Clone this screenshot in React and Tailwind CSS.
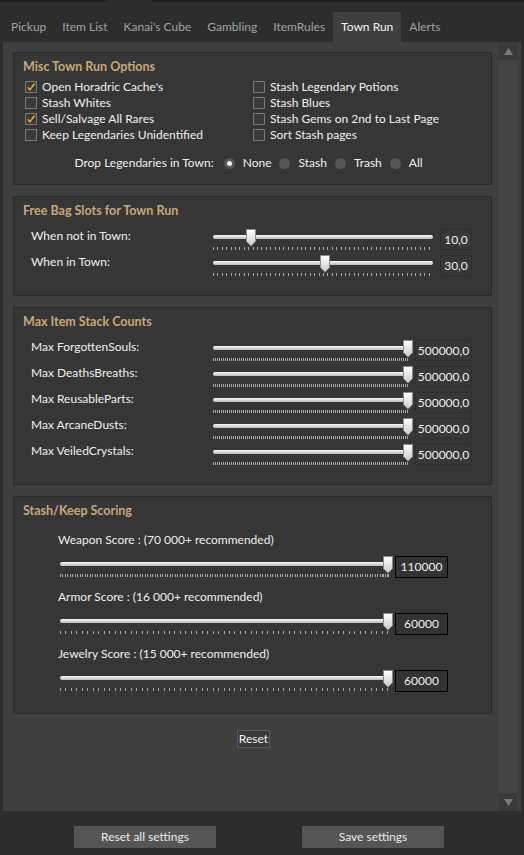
import React from 'react';

const tabs = ['Pickup', 'Item List', "Kanai's Cube", 'Gambling', 'ItemRules', 'Town Run', 'Alerts'];

const leftChecks = [
  ['Open Horadric Cache\'s', true],
  ['Stash Whites', false],
  ['Sell/Salvage All Rares', true],
  ['Keep Legendaries Unidentified', false],
];

const rightChecks = [
  ['Stash Legendary Potions', false],
  ['Stash Blues', false],
  ['Stash Gems on 2nd to Last Page', false],
  ['Sort Stash pages', false],
];

const stacks = ['Max ForgottenSouls:', 'Max DeathsBreaths:', 'Max ReusableParts:', 'Max ArcaneDusts:', 'Max VeiledCrystals:'];

const scores = [
  ['Weapon Score : (70 000+ recommended)', '110000', 'bg-[repeating-linear-gradient(90deg,#a8a8a8_0_1px,transparent_1px_2.5px)]'],
  ['Armor Score : (16 000+ recommended)', '60000', 'bg-[repeating-linear-gradient(90deg,#a8a8a8_0_1px,transparent_1px_5.45px)]'],
  ['Jewelry Score : (15 000+ recommended)', '60000', 'bg-[repeating-linear-gradient(90deg,#a8a8a8_0_1px,transparent_1px_5.45px)]'],
];

const Check = ({ label, checked }) => (
  <div className="flex h-[16px] items-center">
    <div className="flex h-[12px] w-[12px] items-center justify-center border border-[#7a7a7a] bg-[#3a3a3a]">
      {checked && (
        <svg width="10" height="10" viewBox="0 0 10 10">
          <path d="M1.5 5.2 L4 7.8 L8.6 1.6" fill="none" stroke="#e8a41c" strokeWidth="1.6" />
        </svg>
      )}
    </div>
    <span className="ml-[5px] leading-[16px]">{label}</span>
  </div>
);

const Radio = ({ label, selected }) => (
  <div className="flex items-center">
    <div className="flex h-[11px] w-[11px] items-center justify-center rounded-full bg-[#555555]">
      {selected && <div className="h-[5px] w-[5px] rounded-full bg-[#f2f2f2]" />}
    </div>
    <span className="ml-[8px] mr-[8px]">{label}</span>
  </div>
);

// piste + graduations, le curseur passe par-dessus
const Slider = ({ w, left, ticks, tickW }) => (
  <div className={`relative h-[26px] shrink-0 ${w}`}>
    <div className="mt-[11px] h-[4px] rounded-[2px] bg-linear-to-b from-[#fbfbfb] to-[#bababa]" />
    <div className={`mt-[8px] h-[3px] ${tickW} ${ticks}`} />
    <svg className="absolute top-[5px]" style={{ left }} width="10" height="18" viewBox="0 0 10 18">
      <defs>
        <linearGradient id="thumbGrad" x1="0" y1="0" x2="0" y2="1">
          <stop offset="0" stopColor="#ffffff" />
          <stop offset="1" stopColor="#c9c9c9" />
        </linearGradient>
      </defs>
      <path d="M0.5 0.5 H9.5 V12.5 L5 17.2 L0.5 12.5 Z" fill="url(#thumbGrad)" stroke="#8c8c8c" strokeWidth="1" />
    </svg>
  </div>
);

const Panel = ({ title, className, children }) => (
  <div className={`ml-[10px] w-[479px] border border-[#2a2a2a] bg-[#363636] pt-[6px] ${className}`}>
    <div className="pl-[9px] text-[12.5px] font-bold leading-[16px] text-[#c8a77b]">{title}</div>
    {children}
  </div>
);

const Arrow = ({ up }) => (
  <div className="flex h-[18px] w-[18px] items-center justify-center bg-[#393939]">
    <svg width="9" height="7" viewBox="0 0 9 7">
      <path d={up ? 'M4.5 0 L9 7 L0 7 Z' : 'M0 0 L9 0 L4.5 7 Z'} fill="#7a7a7a" />
    </svg>
  </div>
);

export default function App() {
  return (
    <div className="flex h-[855px] w-[524px] flex-col overflow-hidden bg-[#2d2d2d] font-['Lato',sans-serif] text-[12px] text-[#f0f0f0]">
      <div className="flex h-[2px] bg-[#1f1f1f]">
        <div className="ml-[107px] w-[45px] bg-[#2d2d2d]" />
      </div>

      <div className="mt-[10px] flex h-[30px] pl-[3px]">
        {tabs.map((t) => (
          <div
            key={t}
            className={`flex items-center px-[8px] ${t === 'Town Run' ? 'bg-[#3f3f3f] text-[#f4f4f4]' : 'text-[#9ea3a7]'}`}
          >
            {t}
          </div>
        ))}
      </div>

      <div className="mx-[3px] flex h-[769px] bg-[#3f3f3f]">
        <div className="w-[496px] pt-[10px]">
          <Panel title="Misc Town Run Options" className="mb-[11px] pb-[13px]">
            <div className="mt-[4px] flex">
              <div className="ml-[11px] w-[228px]">
                {leftChecks.map(([l, c]) => <Check key={l} label={l} checked={c} />)}
              </div>
              <div>
                {rightChecks.map(([l, c]) => <Check key={l} label={l} checked={c} />)}
              </div>
            </div>
            <div className="mt-[12px] flex h-[16px] items-center justify-center">
              <span className="mr-[10px]">Drop Legendaries in Town:</span>
              <Radio label="None" selected />
              <Radio label="Stash" />
              <Radio label="Trash" />
              <Radio label="All" />
            </div>
          </Panel>

          <Panel title="Free Bag Slots for Town Run" className="mb-[11px] pb-[19px]">
            <div className="mt-[5px]">
              {[['When not in Town:', 33, '10,0'], ['When in Town:', 107, '30,0']].map(([l, pos, v]) => (
                <div key={l} className="flex h-[26px]">
                  <div className="mt-[4px] w-[199px] pl-[17px] leading-[16px]">{l}</div>
                  <Slider
                    w="w-[220px]"
                    left={pos}
                    tickW="w-[220px]"
                    ticks="bg-[repeating-linear-gradient(90deg,#a8a8a8_0_1px,transparent_1px_4.4px)]"
                  />
                  <div className="ml-[7px] mt-[5px] flex h-[21px] w-[32px] items-center justify-center border border-[#2e2e2e] bg-[#373737]">
                    {v}
                  </div>
                </div>
              ))}
            </div>
          </Panel>

          <Panel title="Max Item Stack Counts" className="mb-[11px] pb-[19px]">
            <div className="mt-[5px]">
              {stacks.map((l) => (
                <div key={l} className="flex h-[26px]">
                  <div className="mt-[4px] w-[199px] pl-[17px] leading-[16px]">{l}</div>
                  <Slider
                    w="w-[200px]"
                    left={190}
                    tickW="w-[196px]"
                    ticks="bg-[repeating-linear-gradient(90deg,#a8a8a8_0_1px,transparent_1px_2px)]"
                  />
                  <div className="ml-[2px] mt-[5px] flex h-[21px] w-[57px] items-center justify-center border border-[#2e2e2e] bg-[#373737]">
                    500000,0
                  </div>
                </div>
              ))}
            </div>
          </Panel>

          <Panel title="Stash/Keep Scoring" className="pb-[21px]">
            <div className="mt-[13px] flex flex-col gap-[11px]">
              {scores.map(([l, v, t]) => (
                <div key={l}>
                  <div className="pl-[44px] leading-[16px]">{l}</div>
                  <div className="mt-[3px] flex pl-[46px]">
                    <Slider w="w-[333px]" left={323} tickW="w-[329px]" ticks={t} />
                    <div className="ml-[2px] mt-[5px] flex h-[22px] w-[53px] items-center justify-center border border-black bg-[#333333]">
                      {v}
                    </div>
                  </div>
                </div>
              ))}
            </div>
          </Panel>

          <div className="ml-[10px] mt-[16px] flex w-[479px] justify-center">
            <button className="ml-[2px] h-[18px] border border-[#5a5a5a] bg-[#3a3a3a] px-[1px] leading-[16px] text-[#f4f4f4]">
              Reset
            </button>
          </div>
        </div>

        <div className="flex w-[18px] flex-col justify-between bg-[#444444]">
          <Arrow up />
          <Arrow />
        </div>
      </div>

      <div className="mt-[15px] flex pl-[74px]">
        <button className="h-[22px] w-[142px] bg-[#555555] text-[#ececec]">Reset all settings</button>
        <button className="ml-[86px] h-[22px] w-[142px] bg-[#555555] text-[#ececec]">Save settings</button>
      </div>
    </div>
  );
}
